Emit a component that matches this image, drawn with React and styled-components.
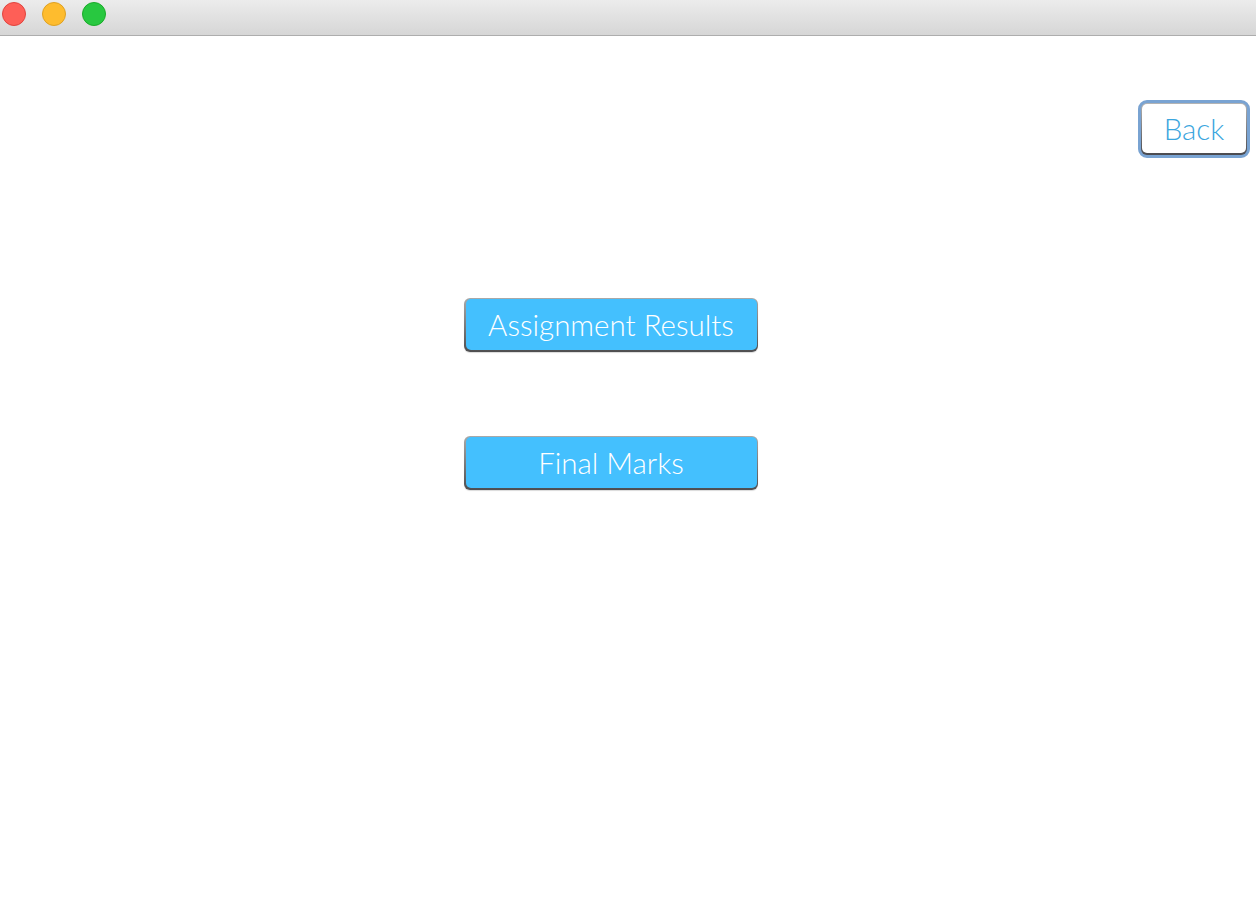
import React from "react";
import styled, { createGlobalStyle } from "styled-components";

const Global = createGlobalStyle`
  html, body { margin: 0; padding: 0; background: #ffffff; }
  body { font-family: Lato, "Open Sans", sans-serif; }
`;

const Window = styled.div`
  width: 1256px;
  height: 910px;
  display: flex;
  flex-direction: column;
  background: #ffffff;
  overflow: hidden;
`;

const TitleBar = styled.div`
  height: 36px;
  flex: none;
  box-sizing: border-box;
  display: flex;
  align-items: center;
  gap: 16px;
  padding: 0 0 1px 2px;
  background: linear-gradient(#ececec, #d6d6d6);
  border-bottom: 1px solid #adadad;
`;

const Light = styled.span`
  width: 24px;
  height: 24px;
  box-sizing: border-box;
  border-radius: 50%;
  background: ${(p) => p.$fill};
  border: 1px solid ${(p) => p.$edge};
  margin-top: -7px;
`;

const Content = styled.div`
  flex: 1;
  display: flex;
  flex-direction: column;
  padding: 64px 6px 0 0;
`;

const TopRow = styled.div`
  display: flex;
  justify-content: flex-end;
`;

const BackButton = styled.button`
  width: 112px;
  height: 58px;
  box-sizing: border-box;
  border-radius: 9px;
  border: 3px solid #79a3d2;
  padding: 0;
  background: #79a3d2;
  display: flex;
  cursor: pointer;
`;

const BackInner = styled.span`
  flex: 1;
  border-radius: 6px;
  background: linear-gradient(#b4b4b4, #4a4a4f);
  padding: 1px 1px 2px 1px;
  display: flex;
`;

const BackFace = styled.span`
  flex: 1;
  border-radius: 5px;
  background: #ffffff;
  color: #3ba6de;
  font-family: Lato, sans-serif;
  font-weight: 300;
  font-size: 29.5px;
  display: flex;
  align-items: center;
  justify-content: center;
`;

const Menu = styled.div`
  display: flex;
  flex-direction: column;
  align-items: center;
  gap: 84px;
  margin-top: 140px;
  padding-right: 28px;
`;

const ActionButton = styled.button`
  width: 294px;
  height: 54px;
  box-sizing: border-box;
  padding: 1px 1.5px 2px 1.5px;
  border: none;
  border-radius: 6px;
  background: linear-gradient(#a9a9a9, #4e4e50);
  box-shadow: 0 1px 1px rgba(0, 0, 0, 0.15);
  display: flex;
  cursor: pointer;
`;

const ActionFace = styled.span`
  flex: 1;
  border-radius: 5px;
  background: #44c0fe;
  color: #ffffff;
  font-family: Lato, sans-serif;
  font-weight: 300;
  font-size: 29.5px;
  display: flex;
  align-items: center;
  justify-content: center;
`;

export default function App() {
  return (
    <>
      <Global />
      <Window>
        <TitleBar>
          <Light $fill="#fe5f57" $edge="#e0443e" />
          <Light $fill="#febc2e" $edge="#dea123" />
          <Light $fill="#28c840" $edge="#1aab29" />
        </TitleBar>
        <Content>
          <TopRow>
            <BackButton>
              <BackInner>
                <BackFace>Back</BackFace>
              </BackInner>
            </BackButton>
          </TopRow>
          <Menu>
            <ActionButton>
              <ActionFace>Assignment Results</ActionFace>
            </ActionButton>
            <ActionButton>
              <ActionFace>Final Marks</ActionFace>
            </ActionButton>
          </Menu>
        </Content>
      </Window>
    </>
  );
}
